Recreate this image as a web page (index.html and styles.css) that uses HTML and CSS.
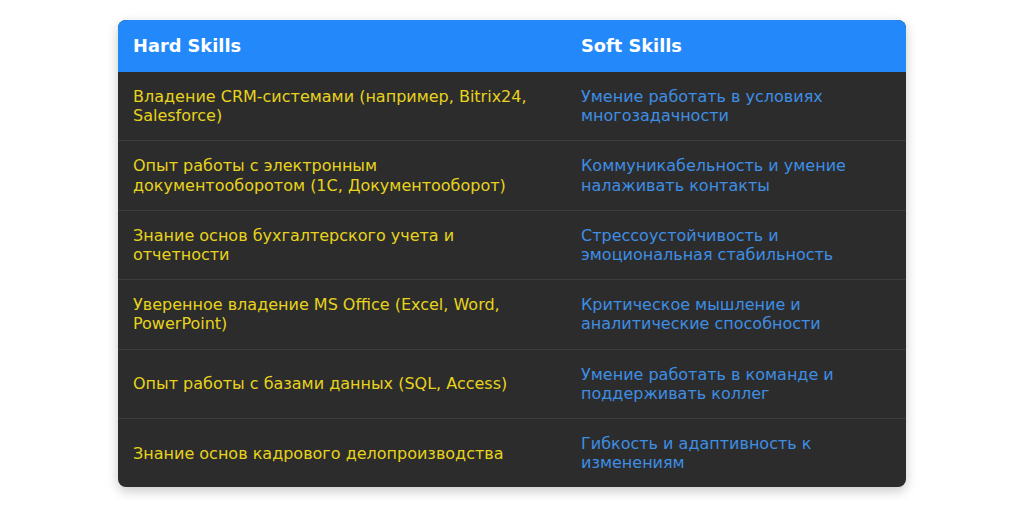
FILE: index.html
```html
<!DOCTYPE html>
<html lang="ru">
<head>
<meta charset="utf-8">
<link rel="stylesheet" href="styles.css">
</head>
<body>
<div class="wrap">
<table class="skills">
<thead>
<tr><th class="c1">Hard Skills</th><th>Soft Skills</th></tr>
</thead>
<tbody>
<tr><td class="hard">Владение CRM-системами (например, Bitrix24, Salesforce)</td><td class="soft">Умение работать в условиях многозадачности</td></tr>
<tr><td class="hard">Опыт работы с электронным документооборотом (1С, Документооборот)</td><td class="soft">Коммуникабельность и умение налаживать контакты</td></tr>
<tr><td class="hard">Знание основ бухгалтерского учета и отчетности</td><td class="soft">Стрессоустойчивость и эмоциональная стабильность</td></tr>
<tr><td class="hard">Уверенное владение MS Office (Excel, Word, PowerPoint)</td><td class="soft">Критическое мышление и аналитические способности</td></tr>
<tr><td class="hard">Опыт работы с базами данных (SQL, Access)</td><td class="soft">Умение работать в команде и поддерживать коллег</td></tr>
<tr><td class="hard">Знание основ кадрового делопроизводства</td><td class="soft">Гибкость и адаптивность к изменениям</td></tr>
</tbody>
</table>
</div>
</body>
</html>
```
FILE: styles.css
```css
html, body {
  margin: 0;
  padding: 0;
  background: #ffffff;
}
body {
  font-family: "DejaVu Sans", sans-serif;
}
.wrap {
  padding: 20px 118px;
}
.skills {
  width: 788px;
  border-collapse: separate;
  border-spacing: 0;
  border-radius: 8px;
  overflow: hidden;
  box-shadow: 0 4px 12px rgba(0, 0, 0, 0.22);
  background: #2c2c2c;
  table-layout: fixed;
}
.skills th {
  background: #2389fb;
  color: #ffffff;
  font-size: 17.8px;
  font-weight: bold;
  text-align: left;
  line-height: 22px;
  padding: 15px 15px;
}
.skills th.c1 {
  width: 418px;
}
.skills td {
  font-size: 16px;
  line-height: 19.2px;
  padding: 15px 15px;
  height: 38.4px;
  border-top: 1px solid #3c3c3c;
  vertical-align: middle;
}
.skills tbody tr:first-child td {
  border-top: none;
}
.hard {
  color: #e7d31c;
}
.soft {
  color: #3e8ee4;
}
```
